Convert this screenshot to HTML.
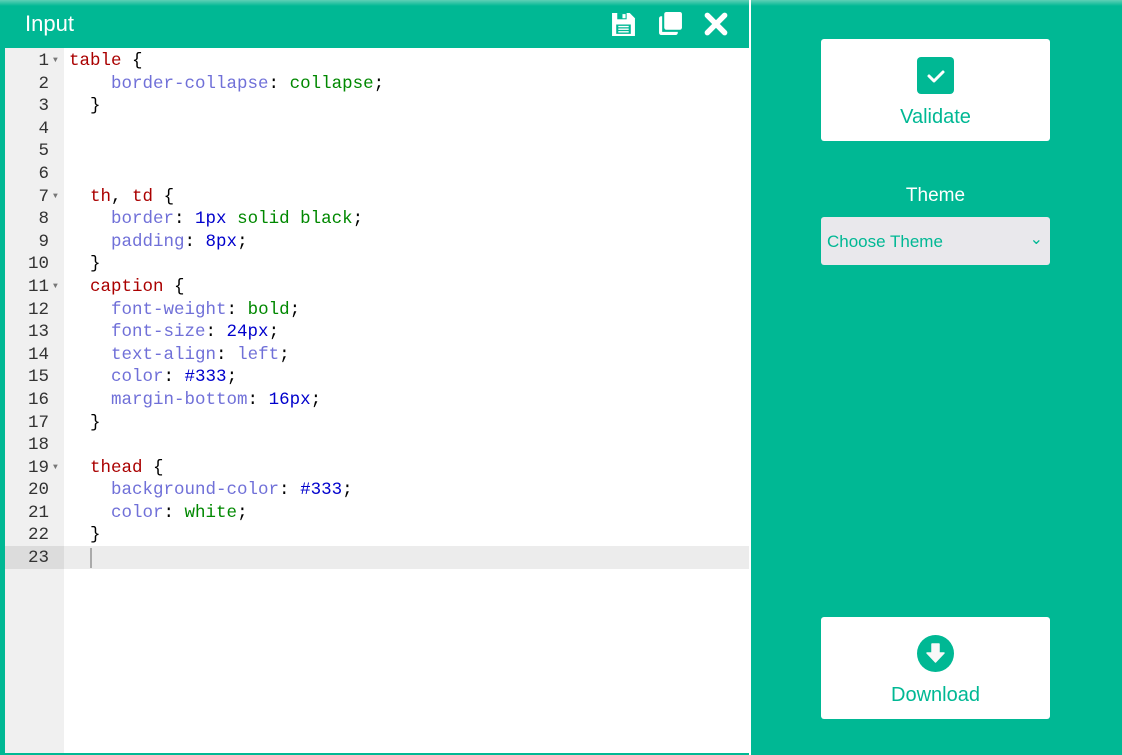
<!DOCTYPE html>
<html><head><style>
body{margin:0;width:1122px;height:755px;background:#00b894;position:relative;overflow:hidden;font-family:"Liberation Sans",sans-serif}
.top{position:absolute;left:0;top:0;width:1122px;height:6px;background:linear-gradient(#5fd0b6,#00b894)}
.ed{position:absolute;left:5px;top:48px;width:744px;height:705px;background:#fff}
.gut{position:absolute;left:0;top:0;width:59px;height:705px;background:#f0f0f0}
.hdr{position:absolute;left:25px;top:11px;color:#fff;font-size:22px}
.code{position:absolute;left:0;top:2px;width:744px;font-family:"Liberation Mono",monospace;font-size:17.5px;line-height:22.6px}
.ln{height:22.6px;position:relative;white-space:pre}
.n{position:absolute;left:0;width:44px;text-align:right;color:#333}
.c{position:absolute;left:64px;color:#000}
.f{position:absolute;left:48px;top:0;font-size:8px;color:#777}
.s{color:#a00}.p{color:#7070d8}.v{color:#080}.u{color:#00c}
.btn{position:absolute;left:821px;width:229px;height:102px;background:#fff;border-radius:3px;text-align:center;color:#00b894;font-size:20px}
</style></head><body>
<div class="top"></div>
<div class="hdr">Input</div>
<svg style="position:absolute;left:611px;top:12px" width="25" height="25" viewBox="0 0 24 24"><path d="M1 1h17l5 5v17H1z" fill="#fff"/><rect x="6" y="1" width="9" height="6" fill="#00b894"/><rect x="11" y="2" width="3" height="4" fill="#fff"/><rect x="5" y="12" width="14" height="9" fill="#00b894"/><path d="M7 14h10M7 16.5h10M7 19h10" stroke="#fff" stroke-width="1.3"/></svg>
<svg style="position:absolute;left:658px;top:11px" width="25" height="25" viewBox="0 0 24 24"><rect x="6" y="1" width="17" height="17" rx="2" fill="#fff"/><path d="M4 5v15h15v1a2 2 0 0 1-2 2H3a2 2 0 0 1-2-2V7a2 2 0 0 1 2-2z" fill="#fff"/></svg>
<svg style="position:absolute;left:703px;top:11px" width="26" height="26" viewBox="0 0 24 24"><path d="M4 4L20 20M20 4L4 20" stroke="#fff" stroke-width="5" stroke-linecap="round"/></svg>
<div class="ed"><div class="gut"></div>
<div style="position:absolute;left:0;top:498px;width:744px;height:23px;background:#ececec"></div>
<div style="position:absolute;left:0;top:498px;width:59px;height:23px;background:#dcdcdc"></div>
<div style="position:absolute;left:85px;top:500px;width:2px;height:20px;background:#aaa"></div>
<div class="code">
<div class="ln"><span class="n">1</span><span class="f">▼</span><span class="c"><span class="s">table</span> {</span></div>
<div class="ln"><span class="n">2</span><span class="c">    <span class="p">border-collapse</span>: <span class="v">collapse</span>;</span></div>
<div class="ln"><span class="n">3</span><span class="c">  }</span></div>
<div class="ln"><span class="n">4</span></div>
<div class="ln"><span class="n">5</span></div>
<div class="ln"><span class="n">6</span></div>
<div class="ln"><span class="n">7</span><span class="f">▼</span><span class="c">  <span class="s">th</span>, <span class="s">td</span> {</span></div>
<div class="ln"><span class="n">8</span><span class="c">    <span class="p">border</span>: <span class="u">1px</span> <span class="v">solid</span> <span class="v">black</span>;</span></div>
<div class="ln"><span class="n">9</span><span class="c">    <span class="p">padding</span>: <span class="u">8px</span>;</span></div>
<div class="ln"><span class="n">10</span><span class="c">  }</span></div>
<div class="ln"><span class="n">11</span><span class="f">▼</span><span class="c">  <span class="s">caption</span> {</span></div>
<div class="ln"><span class="n">12</span><span class="c">    <span class="p">font-weight</span>: <span class="v">bold</span>;</span></div>
<div class="ln"><span class="n">13</span><span class="c">    <span class="p">font-size</span>: <span class="u">24px</span>;</span></div>
<div class="ln"><span class="n">14</span><span class="c">    <span class="p">text-align</span>: <span class="p">left</span>;</span></div>
<div class="ln"><span class="n">15</span><span class="c">    <span class="p">color</span>: <span class="u">#333</span>;</span></div>
<div class="ln"><span class="n">16</span><span class="c">    <span class="p">margin-bottom</span>: <span class="u">16px</span>;</span></div>
<div class="ln"><span class="n">17</span><span class="c">  }</span></div>
<div class="ln"><span class="n">18</span></div>
<div class="ln"><span class="n">19</span><span class="f">▼</span><span class="c">  <span class="s">thead</span> {</span></div>
<div class="ln"><span class="n">20</span><span class="c">    <span class="p">background-color</span>: <span class="u">#333</span>;</span></div>
<div class="ln"><span class="n">21</span><span class="c">    <span class="p">color</span>: <span class="v">white</span>;</span></div>
<div class="ln"><span class="n">22</span><span class="c">  }</span></div>
<div class="ln"><span class="n">23</span></div>
</div></div>
<div style="position:absolute;left:749px;top:0;width:2px;height:755px;background:#fff"></div>
<div class="btn" style="top:39px"><div style="position:absolute;left:96px;top:18px;width:37px;height:37px;background:#00b894;border-radius:4px"><svg width="37" height="37" viewBox="0 0 37 37"><path d="M12 19l5 5 9-9" stroke="#fff" stroke-width="3" fill="none" stroke-linecap="round" stroke-linejoin="round"/></svg></div><div style="position:absolute;left:0;right:0;top:67px">Validate</div></div>
<div style="position:absolute;left:821px;width:229px;top:185px;text-align:center;color:#fff;font-size:19px">Theme</div>
<div style="position:absolute;left:821px;top:217px;width:229px;height:48px;background:#e9e8ec;border-radius:3px;color:#00b894;font-size:17px"><span style="position:absolute;left:6px;top:15px">Choose Theme</span><span style="position:absolute;right:7px;top:12px;font-size:16px">&#8964;</span></div>
<div class="btn" style="top:617px"><svg style="position:absolute;left:96px;top:18px" width="37" height="37" viewBox="0 0 37 37"><circle cx="18.5" cy="18.5" r="18.5" fill="#00b894"/><path d="M15 9h7v9h5l-8.5 9-8.5-9h5z" fill="#f8f8f8" stroke="#f8f8f8" stroke-width="1.5" stroke-linejoin="round"/></svg><div style="position:absolute;left:0;right:0;top:67px">Download</div></div>
</body></html>
